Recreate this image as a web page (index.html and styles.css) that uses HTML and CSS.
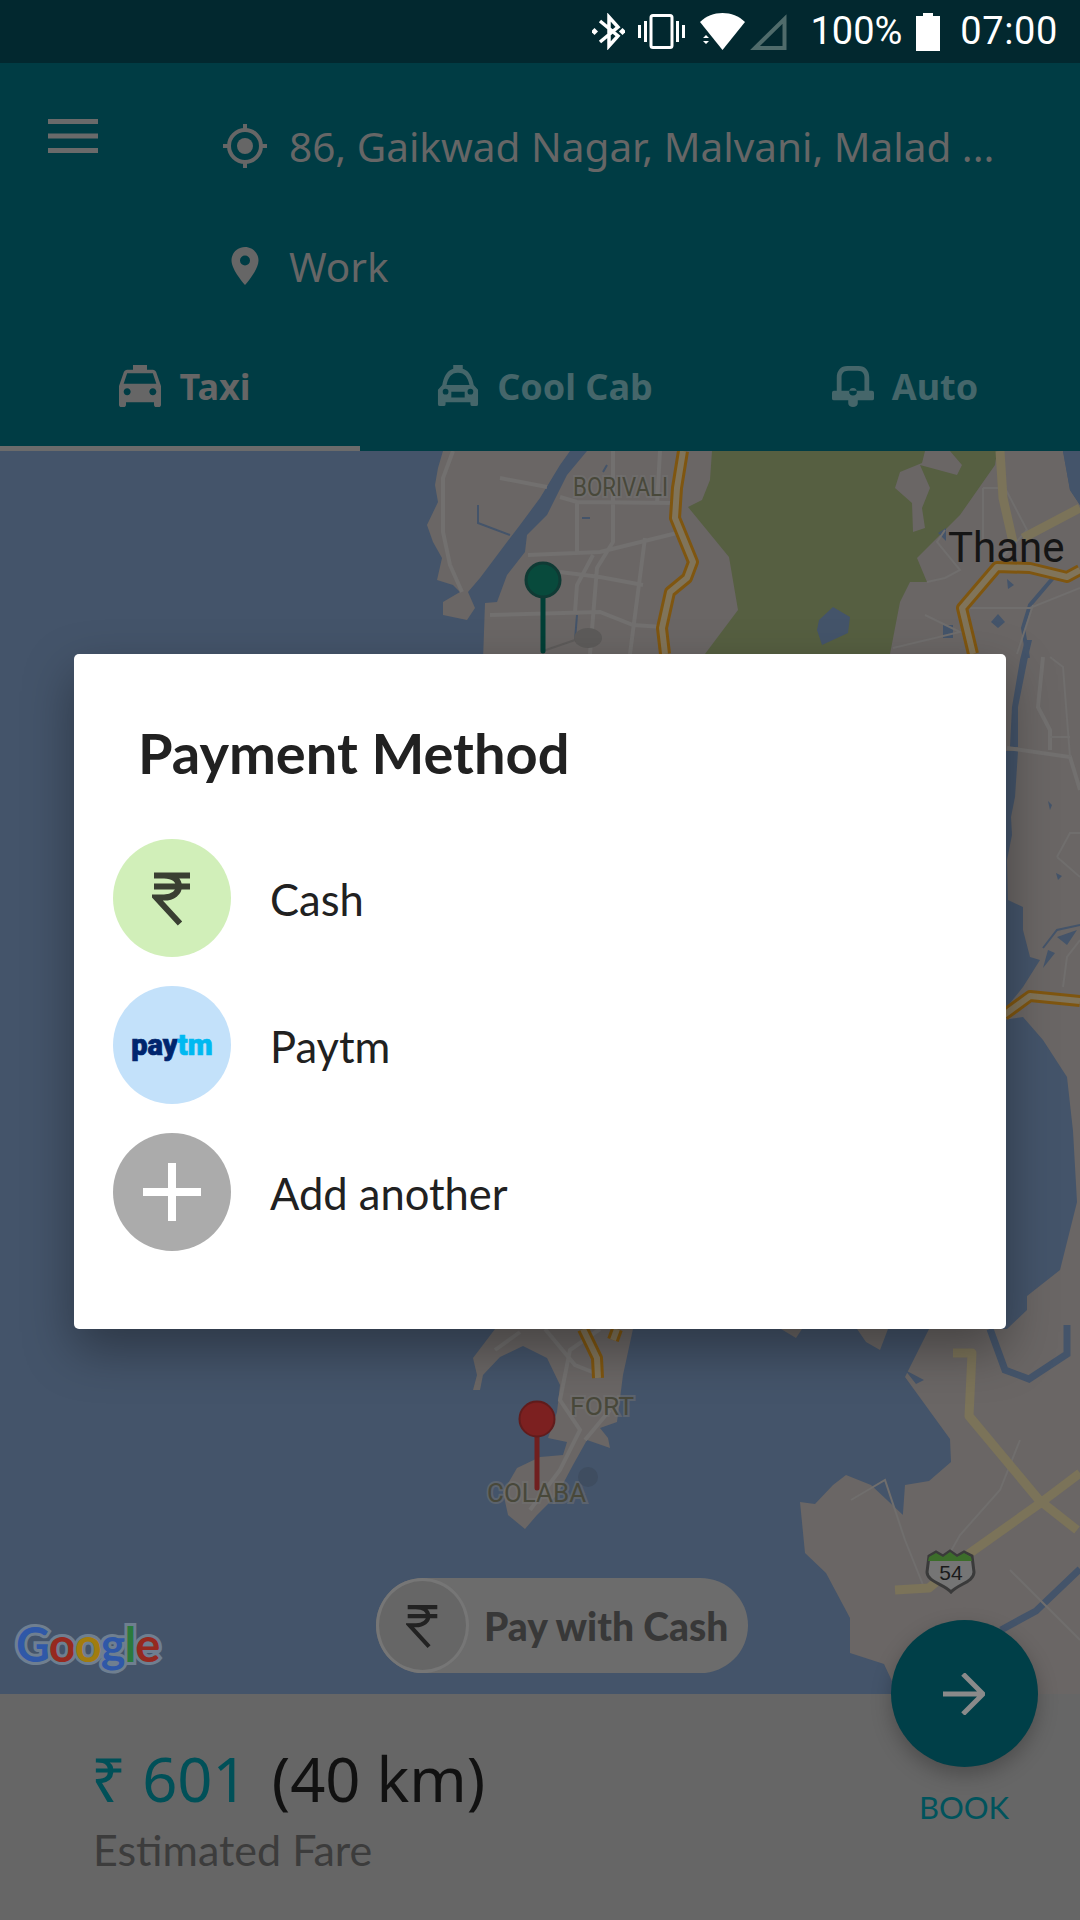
FILE: index.html
```html
<!DOCTYPE html>
<html lang="en">
  <head>
    <meta charset="UTF-8" />
    <title>Book a Cab</title>
    <link rel="stylesheet" href="styles.css">
  </head>
  <body>
    <div class="status-bar">
      <svg class="st-icon bt" viewBox="0 0 33 37"><path d="M8 8l18 15-9 10V4l9 10L8 29" fill="none" stroke="#fff" stroke-width="3.500"/><rect x="0" y="16" width="5" height="5" transform="rotate(45 2.500 18.500)" fill="#fff"/><rect x="28" y="16" width="5" height="5" transform="rotate(45 30.500 18.500)" fill="#fff"/></svg>
      <svg class="st-icon vib" viewBox="0 0 47 35"><rect x="13" y="1.500" width="21" height="32" rx="2" fill="none" stroke="#fff" stroke-width="3"/><path d="M1.500 11v13M7.500 7v21M39.500 7v21M45.500 11v13" stroke="#fff" stroke-width="3"/></svg>
      <svg class="st-icon wifi" viewBox="0 0 45 37"><path d="M0 9C6 3 14 0 22.500 0S39 3 45 9L22.500 37z" fill="#fff"/><path d="M3 25l3-3 3 3zM3 28l3 3 3-3z" fill="#fff"/></svg>
      <svg class="st-icon sig" viewBox="0 0 37 37"><path d="M34.500 6v29H5z" fill="none" stroke="#4f6b6b" stroke-width="4"/></svg>
      <span class="st-text pct">100%</span>
      <svg class="st-icon batt" viewBox="0 0 24 38"><path d="M7 0h10v3h7v35H0V3h7z" fill="#fff"/></svg>
      <span class="st-text clock">07:00</span>
    </div>

    <header class="top">
      <div class="top-row">
        <svg class="menu" viewBox="0 0 50 34"><path d="M0 0h50v5H0zM0 14.500h50v5H0zM0 29h50v5H0z" fill="#6a6a6a"/></svg>
        <div class="route">
          <div class="route-row">
            <svg class="route-icon" viewBox="0 0 44 44"><circle cx="22" cy="22" r="16" fill="none" stroke="#666" stroke-width="4"/><circle cx="22" cy="22" r="8" fill="#666"/><path d="M22 0v7M22 37v7M0 22h7M37 22h7" stroke="#666" stroke-width="4"/></svg>
            <span>86, Gaikwad Nagar, Malvani, Malad ...</span>
          </div>
          <div class="route-row">
            <svg class="route-icon" viewBox="0 0 44 44"><path fill-rule="evenodd" d="M22 3C14.500 3 8.500 9 8.500 16.500 8.500 26 22 41 22 41s13.500-15 13.500-24.500C35.500 9 29.500 3 22 3zm0 18.500a5 5 0 1 1 0-10 5 5 0 0 1 0 10z" fill="#666"/></svg>
            <span>Work</span>
          </div>
        </div>
      </div>
      <nav class="tabs">
        <div class="tab active">
          <svg class="tab-icon" viewBox="3 3 18 18"><path fill="currentColor" d="M18.920 6.010C18.720 5.420 18.160 5 17.500 5H15V3H9v2H6.500c-.66 0-1.210.42-1.420 1.010L3 12v8c0 .55.45 1 1 1h1c.55 0 1-.45 1-1v-1h12v1c0 .55.45 1 1 1h1c.55 0 1-.45 1-1v-8l-2.080-5.990zM6.500 16c-.83 0-1.500-.67-1.500-1.500S5.670 13 6.500 13s1.500.67 1.500 1.500S7.330 16 6.500 16zm11 0c-.83 0-1.500-.67-1.500-1.500s.67-1.500 1.500-1.500 1.500.67 1.500 1.500-.67 1.500-1.500 1.500zM5 11l1.500-4.500h11L19 11H5z"/></svg>
          <span>Taxi</span>
        </div>
        <div class="tab">
          <svg class="tab-icon" viewBox="0 0 44 44"><path fill="currentColor" fill-rule="evenodd" d="M17 0h10v4c7 2 10 9 11.500 17L43 26v15a2 2 0 0 1-2 2h-4a2 2 0 0 1-2-2v-2H9v2a2 2 0 0 1-2 2H3a2 2 0 0 1-2-2V26l4.500-5C7 13 10 6 17 4zM22 8c-7 0-10.500 5-12 13h24c-1.500-8-5-13-12-13zM9 31a3 3 0 1 0 0-6 3 3 0 0 0 0 6zm26 0a3 3 0 1 0 0-6 3 3 0 0 0 0 6zM15 28v6h14v-6z"/></svg>
          <span>Cool Cab</span>
        </div>
        <div class="tab">
          <svg class="tab-icon" viewBox="0 0 44 44"><path fill="currentColor" fill-rule="evenodd" d="M16 1C9 1 5 6 5 13v14H2a2 2 0 0 0-2 2v6a2 2 0 0 0 2 2h15v3a5 4 0 0 0 10 0v-3h15a2 2 0 0 0 2-2v-6a2 2 0 0 0-2-2h-3V13c0-7-4-12-11-12zm1 5h10c5 0 7 3 7 7v14H10V13c0-4 2-7 7-7zm5 26a4 4 0 1 0 0-8 4 4 0 0 0 0 8z"/></svg>
          <span>Auto</span>
        </div>
      </nav>
    </header>

    <main class="map">
      <svg class="map-art" viewBox="0 451 1080 1243">
        <rect x="0" y="451" width="1080" height="1243" fill="#44546a"/>
        <!-- land -->
        <path class="land" d="M443 451L438 468 435 485 438 502 427 525 433 542 442 558 437 580 453 585 460 592 443 602 443 615 467 620 475 608 468 592 480 578 507 542 520 525 540 498 560 465 570 451z"/>
        <path class="land" d="M587 451L567 475 547 515 527 535 525 552 507 575 497 602 485 603 483 660V1000H1000V1340H1080V505L1070 490 1063 451z"/>
        <path class="land" d="M495 1329L473 1358 477 1375 473 1390 480 1390 483 1375 500 1357 523 1346 547 1358 560 1385 557 1412 548 1438 567 1442 563 1455 540 1457 517 1468 503 1492 508 1515 525 1529 537 1515 557 1495 573 1465 587 1440 610 1448 608 1438 600 1428 617 1422 623 1375 633 1329z"/>
        <path class="land" d="M929 1329L905 1377 950 1439 951 1462 929 1481 905 1485 902 1527 919 1530 871 1485 846 1475 833 1485 815 1504 800 1502 805 1553 826 1573 850 1618 850 1653 884 1664 898 1694H1080V1329z"/>
        <path class="land" d="M781 1329L802 1329 796 1338zM857 1329H888L880 1350 866 1342z"/>
        <!-- park -->
        <path class="park" fill-rule="evenodd" d="M712 451L710 480 702 500 688 507 729 557 738 610 705 654H890L900 602 910 582 927 582 917 558 960 515 995 465 997 451zM925 451L922 463 900 472 895 488 912 503 913 532 925 528 922 508 930 488 920 465 957 475 962 465 950 451z"/>
        <path class="water" d="M819 620L833 607 850 617 848 633 822 645 817 630z"/>
        <!-- water on top of land, right side -->
        <path class="water" d="M1063 451L1070 490 1080 505V451zM1025 640H1032L1028 657 1018 707V747H1010L1012 707 1020 660zM1000 751H1018L1015 797 1011 817 1012 835 1007 860 1008 900 1023 907 1023 930 1030 957 1040 960 1023 987 1006 1008H1000zM990 1022L1023 1017 1043 1040 1067 1077 1073 1131 1077 1202 1060 1270 1027 1296 1027 1310 1007 1329H990zM1057 937L1077 930 1067 945zM1048 950L1055 953 1043 968zM1048 801L1052 805 1050 810zM1056 873L1062 876 1058 880z"/>
        <path class="creek" d="M990 1329L1005 1370 1029 1379 1067 1354 1067 1325M1080 1569L1036 1611 1001 1630"/>
        <path class="creek-thin" d="M478 505V523L510 535M577 615L575 640M590 518H582M607 465L603 472M1043 948L1057 930 1080 925"/>
        <path class="creek-mid" d="M1053 578L1030 605 1023 628 1028 658"/>
        <path class="water" d="M998 614L1005 622 998 628 991 622zM943 625H953V638H943zM1007 579L1014 585 1008 589zM938 533L946 528 946 541zM905 1370L924 1380 916 1384z"/>
        <!-- roads -->
        <path class="road" d="M453 451L443 478V532L450 565 462 592M500 478L547 487M560 497L577 502 673 503M528 555L600 552 677 533M613 451V542L597 568 590 654M577 502V552M645 538L630 654M660 451L657 505M490 615L600 612 633 625 663 627M560 572L600 577 643 585M593 555L577 585 575 612"/>
        <path class="road" d="M495 1350L520 1332M600 1329L570 1350 560 1400 580 1430 560 1470 530 1510M545 1329L575 1365 600 1375M585 1440L610 1410M1007 748L1070 757 1080 790M1043 657L1038 707 1050 730V750"/>
        <path class="road-thin" d="M983 488V540M983 488H1005L1027 530 1000 560M927 582L945 578 960 570 937 542 945 530M925 615L960 632 893 648M967 608H1030L1080 588M1033 605L1017 654M1050 657L1063 667 1070 757M1050 737H1070M1057 857L1070 833H1080M1057 857L1080 877M1063 987L1067 957 1080 940M851 1500L885 1480 905 1540 925 1590 895 1590M929 1590L960 1535 1000 1490 1020 1440M1010 1570L1080 1640"/>
        <path class="hwy-pale" d="M1000 451L1003 498 1013 542M1023 538L1080 508M953 1353H972L969 1416 1039 1500 1077 1530M1080 1473L1039 1504 970 1553 929 1588 895 1590"/>
        <path class="hwy" d="M683 451L677 488 675 518 693 562 687 578 670 592 662 628 665 654M973 654L962 608 997 567 1030 568 1067 577 1080 570M1004 1015L1030 996 1080 1001M583 1329L597 1358 598 1378M617 1329L613 1340"/>
        <path class="hwy-in" d="M683 451L677 488 675 518 693 562 687 578 670 592 662 628 665 654M973 654L962 608 997 567 1030 568 1067 577 1080 570M1004 1015L1030 996 1080 1001M583 1329L597 1358 598 1378M617 1329L613 1340"/>
        <!-- labels -->
        <text class="lbl" x="573" y="496" font-size="25" textLength="95" lengthAdjust="spacingAndGlyphs">BORIVALI</text>
        <text class="lbl" x="570" y="1415" font-size="26.500">FORT</text>
        <text class="lbl" x="487" y="1502" font-size="26">COLABA</text>
        <text class="city" x="948" y="562">Thane</text>
        <!-- shield -->
        <path d="M929 1556L936 1552 943 1556 950 1551 957 1556 964 1552 972 1556 974 1572C974 1582 958 1584 951 1592 944 1584 927 1582 927 1572z" fill="#757575" stroke="#3a3a3a" stroke-width="3"/>
        <path d="M929 1557L936 1553 943 1557 950 1552 957 1557 964 1553 971 1557 972 1561H928z" fill="#3c6d2a"/>
        <text x="951" y="1580" font-size="21" text-anchor="middle" fill="#1a1a1a" font-family="Liberation Sans">54</text>
        <!-- pins -->
        <ellipse cx="588" cy="638" rx="14" ry="10" fill="#5d5b5a"/>
        <path d="M543 651L575 640" stroke="#5d5b5a" stroke-width="2"/>
        <circle cx="588" cy="1477" r="10" fill="#3f4d60"/>
        <path d="M543 598V651" stroke="#003f36" stroke-width="5" stroke-linecap="round"/>
        <circle cx="543" cy="580" r="17" fill="#084a3c" stroke="#0f3a34" stroke-width="3"/>
        <path d="M537 1437V1488" stroke="#701f1f" stroke-width="5" stroke-linecap="round"/>
        <circle cx="537" cy="1419" r="17.500" fill="#7c2020" stroke="#611c1c" stroke-width="2"/>
        <!-- google mark -->
        <text class="google" x="16" y="1662"><tspan fill="#2f58a8">G</tspan><tspan fill="#96291f">o</tspan><tspan fill="#a27c0e">o</tspan><tspan fill="#2f58a8">g</tspan><tspan fill="#2a7a3c">l</tspan><tspan fill="#96291f">e</tspan></text>
      </svg>

      <div class="cash-pill">
        <div class="cash-pill-icon">
          <svg class="rupee" viewBox="0 0 40 56"><path d="M2 5H38M2 16H38M12 5C22 5 27 10 27 16 27 22 21 27 12 27H4L28 53" fill="none" stroke="currentColor" stroke-width="5"/></svg>
        </div>
        <span>Pay with Cash</span>
      </div>
    </main>

    <section class="fare">
      <div class="fare-line"><span class="fare-price">₹ 601</span> <span class="fare-dist">(40 km)</span></div>
      <div class="fare-label">Estimated Fare</div>
      <div class="book">
        <div class="book-btn">
          <svg viewBox="0 0 42 42"><path d="M0 21H39M20 1L40 21 20 41" fill="none" stroke="#8a8a8a" stroke-width="5"/></svg>
        </div>
        <span>BOOK</span>
      </div>
    </section>

    <div class="dialog">
      <h2>Payment Method</h2>
      <ul class="methods">
        <li>
          <div class="method-icon cash">
            <svg class="cash-rupee" viewBox="0 0 40 56"><path d="M2 5H38M2 16H38M12 5C22 5 27 10 27 16 27 22 21 27 12 27H4L28 53" fill="none" stroke="#3a3f32" stroke-width="6"/></svg>
          </div>
          <span>Cash</span>
        </li>
        <li>
          <div class="method-icon paytm">
            <b class="paytm-logo">pay<i>tm</i></b>
          </div>
          <span>Paytm</span>
        </li>
        <li>
          <div class="method-icon add">
            <svg class="plus" viewBox="0 0 58 58"><path d="M29 0V58M0 29H58" stroke="#fff" stroke-width="8"/></svg>
          </div>
          <span>Add another</span>
        </li>
      </ul>
    </div>
  </body>
</html>
```

FILE: styles.css
```css
* {
  box-sizing: border-box;
}

body {
  margin: 0;
  width: 1080px;
  height: 1920px;
  position: relative;
  overflow: hidden;
  font-family: Lato, sans-serif;
  background-color: #666;
}

.status-bar {
  height: 63px;
  background-color: #02282f;
  display: flex;
  align-items: center;
  justify-content: flex-end;
  padding-right: 22px;
  color: white;
}

.st-icon {
  display: block;
  height: 37px;
}

.bt {
  width: 33px;
  margin-right: 13px;
}

.vib {
  width: 47px;
  height: 35px;
  margin-right: 15px;
}

.wifi {
  width: 45px;
  margin-right: 5px;
}

.sig {
  width: 37px;
  margin-right: 23px;
}

.st-text {
  font-family: Roboto, sans-serif;
  font-size: 38px;
  line-height: 63px;
}

.batt {
  width: 24px;
  height: 38px;
  margin: 0 20px 0 14px;
}

.clock {
  letter-spacing: 0.6px;
}

.top {
  height: 388px;
  background-color: #003c44;
  color: #666;
  padding-top: 23px;
}

.top-row {
  display: flex;
  height: 240px;
  padding-left: 48px;
}

.menu {
  width: 50px;
  height: 34px;
  margin-top: 33px;
  margin-right: 125px;
}

.route-row {
  display: flex;
  align-items: center;
  height: 120px;
  font-family: "Noto Sans", sans-serif;
  font-size: 40.5px;
  white-space: nowrap;
}

.route-icon {
  width: 44px;
  height: 44px;
  margin-right: 22px;
}

.tabs {
  display: flex;
  height: 125px;
}

.tab {
  flex: 1;
  display: flex;
  align-items: center;
  justify-content: center;
  gap: 18px;
  padding-left: 10px;
  color: #45666a;
  font-family: "Noto Sans", sans-serif;
  font-size: 36px;
  font-weight: 700;
  border-bottom: 5px solid transparent;
}

.tab.active {
  color: #666;
  border-bottom-color: #6b6b6b;
}

.tab-icon {
  width: 42px;
  height: 42px;
}

.map {
  position: relative;
  height: 1243px;
}

.map-art {
  display: block;
  width: 1080px;
  height: 1243px;
}

.land {
  fill: #6a6665;
}

.park {
  fill: #565f41;
}

.water {
  fill: #44546a;
}

.creek {
  fill: none;
  stroke: #44546a;
  stroke-width: 7;
}

.creek-mid {
  fill: none;
  stroke: #44546a;
  stroke-width: 4;
}

.creek-thin {
  fill: none;
  stroke: #44546a;
  stroke-width: 2;
}

.road {
  fill: none;
  stroke: #72706f;
  stroke-width: 4;
}

.road-thin {
  fill: none;
  stroke: #706e6d;
  stroke-width: 2;
}

.hwy-pale {
  fill: none;
  stroke: #7b7359;
  stroke-width: 9;
  stroke-linejoin: round;
}

.hwy {
  fill: none;
  stroke: #7f5610;
  stroke-width: 12;
  stroke-linejoin: round;
}

.hwy-in {
  fill: none;
  stroke: #80745a;
  stroke-width: 6;
  stroke-linejoin: round;
}

.lbl {
  font-family: Roboto, sans-serif;
  fill: #48483a;
  stroke: #727272;
  stroke-width: 4px;
  stroke-opacity: 0.5;
  paint-order: stroke;
}

.city {
  font-family: Roboto, sans-serif;
  font-size: 42px;
  fill: #151515;
}

.google {
  font-family: Lato, sans-serif;
  font-size: 47px;
  font-weight: 700;
  stroke: #6f7f90;
  stroke-width: 6px;
  paint-order: stroke;
  letter-spacing: -1px;
}

.cash-pill {
  position: absolute;
  left: 376px;
  top: 1127px;
  width: 372px;
  height: 95px;
  border-radius: 48px;
  background-color: #6c6c6c;
  display: flex;
  align-items: center;
  gap: 15px;
  color: #383838;
  font-size: 39px;
  font-weight: 900;
}

.cash-pill-icon {
  width: 93px;
  height: 95px;
  border: 3px solid #767676;
  border-radius: 50%;
  background-color: #666;
  display: flex;
  align-items: center;
  justify-content: center;
  color: #222;
}

.rupee {
  width: 33px;
  height: 46px;
}

.fare {
  position: relative;
  height: 226px;
  background-color: #666;
  padding: 50px 0 0 91px;
}

.fare-line {
  font-family: "Noto Sans", sans-serif;
  font-size: 61.5px;
  line-height: 68px;
  color: #111;
  white-space: nowrap;
}

.fare-price {
  color: #005058;
  margin-right: 8px;
}

.fare-label {
  font-size: 43px;
  line-height: 50px;
  margin-top: 13px;
  margin-left: 2px;
  color: #3c3c3c;
}

.book {
  position: absolute;
  left: 874px;
  top: -74px;
  width: 180px;
  display: flex;
  flex-direction: column;
  align-items: center;
  color: #00535c;
  font-size: 31px;
}

.book-btn {
  width: 147px;
  height: 147px;
  border-radius: 50%;
  background-color: #003f48;
  box-shadow: 0 8px 20px rgba(0, 0, 0, 0.25);
  display: flex;
  align-items: center;
  justify-content: center;
  margin-bottom: 21px;
}

.book-btn svg {
  width: 42px;
  height: 42px;
}

.dialog {
  position: absolute;
  left: 74px;
  top: 654px;
  width: 932px;
  height: 675px;
  background: white;
  border-radius: 5px;
  box-shadow: 0 20px 50px rgba(0, 0, 0, 0.35);
  padding: 64px 39px 0;
  color: #212121;
}

.dialog h2 {
  margin: 0 0 51px 25px;
  font-size: 56px;
  line-height: 70px;
  font-weight: 700;
}

.methods {
  list-style: none;
  margin: 0;
  padding: 0;
  display: flex;
  flex-direction: column;
  gap: 29px;
}

.methods li {
  display: flex;
  align-items: center;
  gap: 39px;
  font-size: 43.5px;
}

.methods li span {
  margin-top: 2px;
}

.method-icon {
  width: 118px;
  height: 118px;
  border-radius: 50%;
  display: flex;
  align-items: center;
  justify-content: center;
}

.method-icon.cash {
  background-color: #d1efb9;
}

.method-icon.paytm {
  background-color: #c3e1fa;
}

.method-icon.add {
  background-color: #ababab;
}

.cash-rupee {
  width: 40px;
  height: 57px;
}

.paytm-logo {
  font-family: Roboto, sans-serif;
  font-size: 29px;
  font-weight: 900;
  line-height: 36px;
  color: #00256e;
  -webkit-text-stroke: 0.7px #00256e;
}

.paytm-logo i {
  font-style: normal;
  color: #00b9f1;
  -webkit-text-stroke: 0.7px #00b9f1;
}

.plus {
  width: 58px;
  height: 58px;
}
```
